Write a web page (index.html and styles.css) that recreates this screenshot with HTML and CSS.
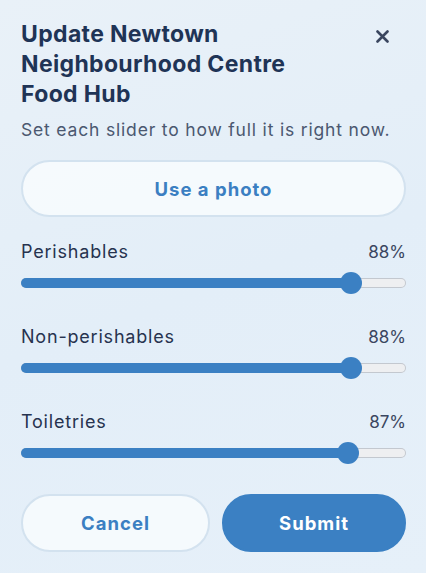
FILE: index.html
```html
<!DOCTYPE html>
<html lang="en">
<head>
<meta charset="utf-8">
<title>Update Food Hub</title>
<link rel="stylesheet" href="styles.css">
</head>
<body>
<div class="dialog">
  <div class="header">
    <h1 class="title">Update Newtown<br>Neighbourhood Centre<br>Food Hub</h1>
    <button class="close" aria-label="Close">
      <svg width="13" height="13" viewBox="0 0 13 13"><path d="M1.5 1.5L11.5 11.5M11.5 1.5L1.5 11.5" stroke="#3a465f" stroke-width="2.6" stroke-linecap="round"/></svg>
    </button>
  </div>
  <p class="subtitle">Set each slider to how full it is right now.</p>
  <button class="btn btn-outline photo">Use a photo</button>

  <div class="field">
    <div class="field-row"><span class="label">Perishables</span><span class="value">88%</span></div>
    <div class="slider" style="--p:0.88"><div class="fill"></div><div class="thumb"></div></div>
  </div>
  <div class="field">
    <div class="field-row"><span class="label">Non-perishables</span><span class="value">88%</span></div>
    <div class="slider" style="--p:0.88"><div class="fill"></div><div class="thumb"></div></div>
  </div>
  <div class="field">
    <div class="field-row"><span class="label">Toiletries</span><span class="value">87%</span></div>
    <div class="slider" style="--p:0.87"><div class="fill"></div><div class="thumb"></div></div>
  </div>

  <div class="actions">
    <button class="btn btn-outline">Cancel</button>
    <button class="btn btn-primary">Submit</button>
  </div>
</div>
</body>
</html>
```
FILE: styles.css
```css
html, body {
  margin: 0;
  padding: 0;
}
body {
  width: 426px;
  height: 573px;
  overflow: hidden;
  background: linear-gradient(160deg, #e9f1f8 0%, #e3eef8 50%, #e6f0f9 100%);
  font-family: Inter, "Noto Sans", sans-serif;
  color: #24324d;
}
.dialog {
  padding: 19px 20px 0 21px;
  display: flex;
  flex-direction: column;
}
.header {
  display: flex;
  justify-content: space-between;
  align-items: flex-start;
}
.title {
  margin: 0;
  font-size: 23px;
  font-weight: 700;
  line-height: 30px;
  color: #1f3456;
  letter-spacing: 0.35px;
}
.close {
  border: 0;
  background: none;
  padding: 0;
  margin: 11px 17px 0 0;
  width: 13px;
  height: 13px;
  display: flex;
}
.subtitle {
  margin: 9px 0 0;
  font-size: 17.5px;
  line-height: 24px;
  color: #4b5870;
  letter-spacing: 0.82px;
  white-space: nowrap;
}
.btn {
  font-family: inherit;
  font-weight: 700;
  font-size: 18.5px;
  letter-spacing: 1px;
  border-radius: 999px;
  height: 58px;
  cursor: pointer;
}
.btn-outline {
  background: rgba(248, 251, 254, 0.85);
  border: 2px solid #d3e2ef;
  color: #3b7fc2;
}
.btn-primary {
  background: #3b80c3;
  border: 2px solid #3b80c3;
  color: #ffffff;
}
.photo {
  margin-top: 18px;
  width: 100%;
  height: 57px;
}
.field {
  margin-top: 23px;
  display: flex;
  flex-direction: column;
  gap: 8px;
}
.field + .field {
  margin-top: 31px;
}
.field-row {
  display: flex;
  justify-content: space-between;
  align-items: baseline;
  line-height: 24px;
  color: #27334f;
}
.label {
  font-size: 18px;
  letter-spacing: 0.8px;
}
.value {
  font-size: 17px;
  color: #3a4660;
}
.slider {
  position: relative;
  height: 22px;
}
.slider::before {
  content: "";
  position: absolute;
  left: 0;
  right: 0;
  top: 6px;
  height: 10px;
  border-radius: 6px;
  background: #eeeff1;
  box-shadow: inset 0 0 0 1px #c3c8cf;
}
.fill {
  position: absolute;
  left: 0;
  top: 6px;
  height: 10px;
  border-radius: 6px;
  background: #3b80c3;
  width: calc(var(--p) * (100% - 22px) + 11px);
}
.thumb {
  position: absolute;
  top: 0;
  left: calc(var(--p) * (100% - 22px));
  width: 22px;
  height: 22px;
  border-radius: 50%;
  background: #3b80c3;
}
.actions {
  margin-top: 30px;
  display: grid;
  grid-template-columns: 189px 1fr;
  gap: 12px;
}
```
